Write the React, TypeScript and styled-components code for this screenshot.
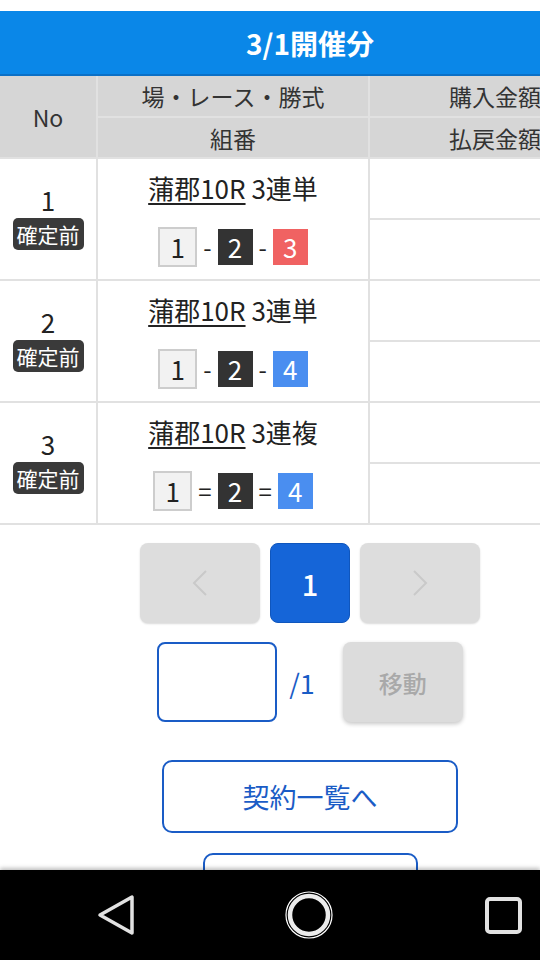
import React from "react";
import styled, { createGlobalStyle } from "styled-components";

const Global = createGlobalStyle`
  html, body {
    margin: 0;
    padding: 0;
    overflow: hidden;
    background: #ffffff;
  }
  body {
    font-family: "Noto Sans CJK JP", "Noto Sans", sans-serif;
    color: #222;
  }
`;

const Page = styled.div`
  width: 620px;
  padding-top: 11px;
  background: #fff;
`;

const TitleBar = styled.header`
  height: 63px;
  background: #0a87e8;
  border-bottom: 2px solid #0b70c6;
  display: flex;
  align-items: center;
  justify-content: center;
  color: #fff;
  font-size: 28px;
  font-weight: 700;
`;

const Table = styled.div`
  display: grid;
  grid-template-columns: 96px 270px 1fr;
  grid-template-rows: 40px 39px repeat(6, 59px);
  gap: 2px;
  background: #e1e1e1;
  padding-bottom: 2px;
`;

const HeadCell = styled.div<{ $rows?: number }>`
  grid-row: span ${(p) => p.$rows ?? 1};
  background: #d6d6d6;
  color: #333;
  font-size: 23px;
  display: flex;
  align-items: center;
  justify-content: center;
`;

const BodyCell = styled.div<{ $rows?: number }>`
  grid-row: span ${(p) => p.$rows ?? 1};
  background: #fff;
  display: flex;
  flex-direction: column;
  align-items: center;
  justify-content: center;
`;

const NoCell = styled(BodyCell)`
  gap: 3px;
  padding-bottom: 4px;
`;

const RowNo = styled.div`
  font-size: 26px;
  line-height: 30px;
  color: #222;
`;

const Badge = styled.span`
  background: #3a3a3a;
  color: #fff;
  font-size: 21px;
  line-height: 32px;
  height: 32px;
  padding: 0 4px;
  border-radius: 5px;
`;

const RaceCell = styled(BodyCell)`
  gap: 22px;
`;

const RaceTitle = styled.div`
  font-size: 26px;
  line-height: 34px;
  color: #222;
`;

const RaceLink = styled.span`
  text-decoration: underline;
  text-decoration-thickness: 2px;
  text-underline-offset: 4px;
`;

const Combo = styled.div`
  display: flex;
  align-items: center;
  height: 40px;
`;

const boxColors: Record<string, { bg: string; fg: string; border: string }> = {
  white: { bg: "#f2f2f2", fg: "#222", border: "#cdcdcd" },
  black: { bg: "#333333", fg: "#fff", border: "#333333" },
  red: { bg: "#f06262", fg: "#fff", border: "#f06262" },
  blue: { bg: "#4a8ef0", fg: "#fff", border: "#4a8ef0" },
};

const Boat = styled.span<{ $c: string }>`
  width: 35px;
  height: 36px;
  border: ${(p) => (p.$c === "white" ? 2 : 0)}px solid ${(p) => boxColors[p.$c].border};
  background: ${(p) => boxColors[p.$c].bg};
  color: ${(p) => boxColors[p.$c].fg};
  font-size: 26px;
  line-height: 36px;
  display: flex;
  align-items: center;
  justify-content: center;
`;

const Sep = styled.span`
  font-size: 24px;
  color: #222;
  margin: 0 6px;
  line-height: 36px;
`;

const Pager = styled.div`
  display: flex;
  justify-content: center;
  gap: 10px;
  margin-top: 18px;
`;

const ArrowBtn = styled.button`
  width: 120px;
  height: 80px;
  border: none;
  border-radius: 8px;
  background: #dddddd;
  box-shadow: 0 1px 2px rgba(0, 0, 0, 0.15);
  display: flex;
  align-items: center;
  justify-content: center;
  padding: 0;
`;

const PageBtn = styled.button`
  width: 80px;
  height: 80px;
  border: 1px solid #0f56bd;
  border-radius: 8px;
  background: #1565d8;
  color: #fff;
  font-family: inherit;
  font-size: 29px;
  font-weight: 500;
  padding: 0;
`;

const JumpRow = styled.div`
  display: flex;
  justify-content: center;
  align-items: center;
  gap: 12px;
  margin-top: 19px;
`;

const PageInput = styled.div`
  width: 116px;
  height: 76px;
  border: 2px solid #1a5cc6;
  border-radius: 8px;
  background: #fff;
`;

const Total = styled.span`
  color: #1a5cc6;
  font-size: 27px;
  margin-right: 16px;
`;

const MoveBtn = styled.button`
  width: 120px;
  height: 80px;
  border: none;
  border-radius: 8px;
  background: #dcdcdc;
  color: #a9a9a9;
  font-family: inherit;
  font-size: 24px;
  font-weight: 500;
  box-shadow: 0 2px 4px rgba(0, 0, 0, 0.22);
`;

const LinkBtn = styled.button<{ $w: number; $mt: number }>`
  display: block;
  margin: ${(p) => p.$mt}px auto 0;
  width: ${(p) => p.$w}px;
  height: 73px;
  border: 2px solid #1a5cc6;
  border-radius: 10px;
  background: #fff;
  color: #1a5cc6;
  font-family: inherit;
  font-size: 27px;
`;

const NavBar = styled.nav`
  position: fixed;
  left: 0;
  bottom: 0;
  width: 540px;
  height: 90px;
  background: #000;
  box-shadow: 0 -2px 4px rgba(0, 0, 0, 0.25);
  display: flex;
  align-items: center;
  padding-left: 96px;
  box-sizing: border-box;
`;

const NavIcon = styled.svg<{ $ml: number }>`
  margin-left: ${(p) => p.$ml}px;
  display: block;
`;

const Chevron = ({ dir }: { dir: "left" | "right" }) => (
  <svg width="18" height="28" viewBox="0 0 18 28">
    <path
      d={dir === "left" ? "M15 2 L3 14 L15 26" : "M3 2 L15 14 L3 26"}
      fill="none"
      stroke="#c9c9c9"
      strokeWidth="2"
    />
  </svg>
);

type Rec = {
  no: number;
  type: string;
  sep: string;
  boats: { n: number; c: string }[];
};

const records: Rec[] = [
  { no: 1, type: "3連単", sep: "-", boats: [{ n: 1, c: "white" }, { n: 2, c: "black" }, { n: 3, c: "red" }] },
  { no: 2, type: "3連単", sep: "-", boats: [{ n: 1, c: "white" }, { n: 2, c: "black" }, { n: 4, c: "blue" }] },
  { no: 3, type: "3連複", sep: "=", boats: [{ n: 1, c: "white" }, { n: 2, c: "black" }, { n: 4, c: "blue" }] },
];

export default function App() {
  return (
    <>
      <Global />
      <Page>
        <TitleBar>3/1開催分</TitleBar>
        <Table>
          <HeadCell $rows={2}>No</HeadCell>
          <HeadCell>場・レース・勝式</HeadCell>
          <HeadCell>購入金額</HeadCell>
          <HeadCell>組番</HeadCell>
          <HeadCell>払戻金額</HeadCell>
          {records.map((r) => (
            <React.Fragment key={r.no}>
              <NoCell $rows={2}>
                <RowNo>{r.no}</RowNo>
                <Badge>確定前</Badge>
              </NoCell>
              <RaceCell $rows={2}>
                <RaceTitle>
                  <RaceLink>蒲郡10R</RaceLink> {r.type}
                </RaceTitle>
                <Combo>
                  {r.boats.map((b, i) => (
                    <React.Fragment key={i}>
                      {i > 0 && <Sep>{r.sep}</Sep>}
                      <Boat $c={b.c}>{b.n}</Boat>
                    </React.Fragment>
                  ))}
                </Combo>
              </RaceCell>
              <BodyCell />
              <BodyCell />
            </React.Fragment>
          ))}
        </Table>
        <Pager>
          <ArrowBtn aria-label="前へ">
            <Chevron dir="left" />
          </ArrowBtn>
          <PageBtn>1</PageBtn>
          <ArrowBtn aria-label="次へ">
            <Chevron dir="right" />
          </ArrowBtn>
        </Pager>
        <JumpRow>
          <PageInput />
          <Total>/1</Total>
          <MoveBtn>移動</MoveBtn>
        </JumpRow>
        <LinkBtn $w={296} $mt={38}>契約一覧へ</LinkBtn>
        <LinkBtn $w={215} $mt={20}>戻る</LinkBtn>
        <div style={{ height: 120 }} />
      </Page>
      <NavBar>
        <NavIcon $ml={0} width="40" height="44" viewBox="0 0 40 44">
          <polygon
            points="4,22 36,4 36,40"
            fill="none"
            stroke="#e2e2e2"
            strokeWidth="3.5"
            strokeLinejoin="round"
          />
        </NavIcon>
        <NavIcon $ml={148} width="50" height="50" viewBox="0 0 50 50">
          <circle cx="25" cy="25" r="23" fill="none" stroke="#ffffff" strokeWidth="1.2" />
          <circle cx="25" cy="25" r="19" fill="none" stroke="#ececec" strokeWidth="4.5" />
        </NavIcon>
        <NavIcon $ml={149} width="40" height="40" viewBox="0 0 40 40">
          <rect x="4" y="4" width="33" height="33" rx="3" fill="none" stroke="#e2e2e2" strokeWidth="4" />
        </NavIcon>
      </NavBar>
    </>
  );
}
